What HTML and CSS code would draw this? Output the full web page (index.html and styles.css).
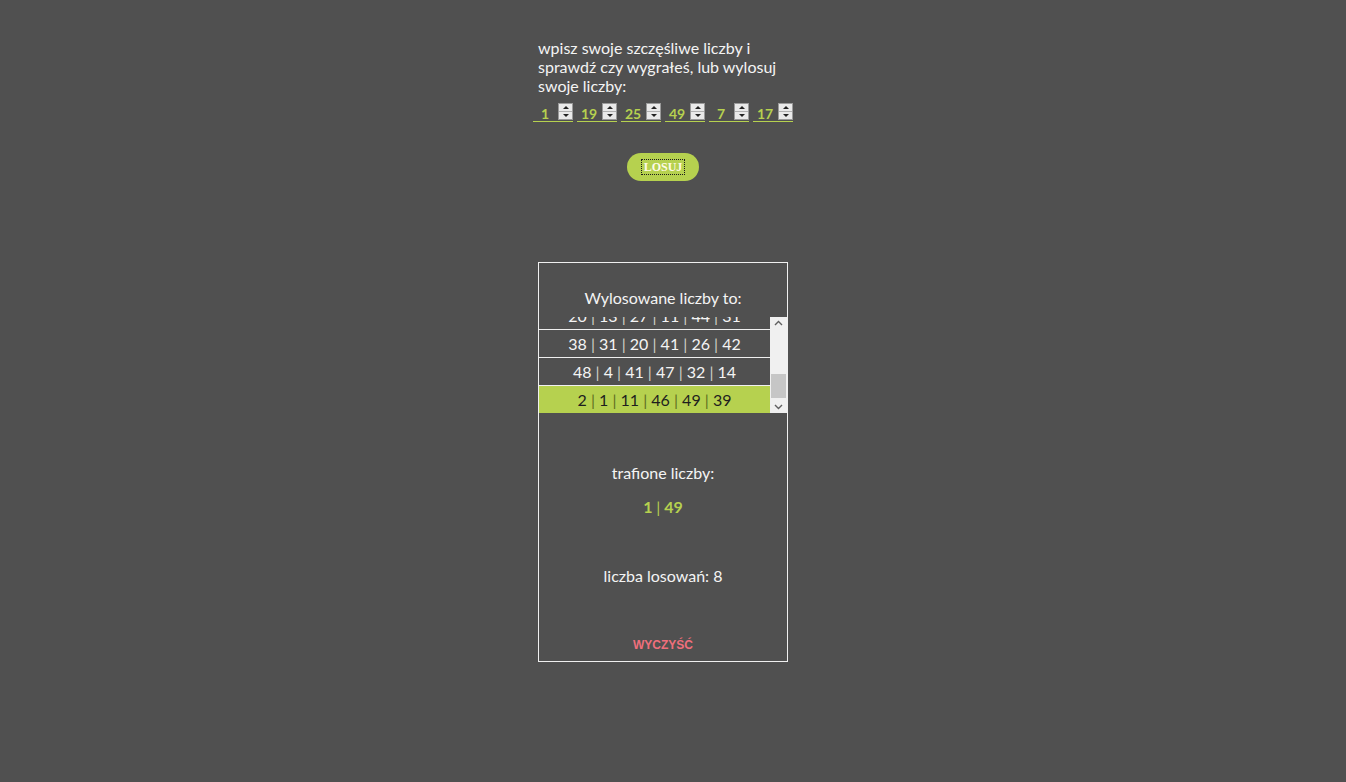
FILE: index.html
```html
<!DOCTYPE html>
<html lang="pl">
<head>
<meta charset="utf-8">
<title>Lotto</title>
<link rel="stylesheet" href="styles.css">
</head>
<body>
<div class="wrap">
  <div class="col">
    <p class="intro">wpisz swoje szczęśliwe liczby i sprawdź czy wygrałeś, lub wylosuj swoje liczby:</p>
    <div class="inputs">
      <span class="num"><input class="num-field" type="text" value="1"><span class="spin"><span class="up"></span><span class="down"></span></span></span>
      <span class="num"><input class="num-field" type="text" value="19"><span class="spin"><span class="up"></span><span class="down"></span></span></span>
      <span class="num"><input class="num-field" type="text" value="25"><span class="spin"><span class="up"></span><span class="down"></span></span></span>
      <span class="num"><input class="num-field" type="text" value="49"><span class="spin"><span class="up"></span><span class="down"></span></span></span>
      <span class="num"><input class="num-field" type="text" value="7"><span class="spin"><span class="up"></span><span class="down"></span></span></span>
      <span class="num"><input class="num-field" type="text" value="17"><span class="spin"><span class="up"></span><span class="down"></span></span></span>
    </div>
    <div class="btn-row">
      <button class="losuj"><span class="focus">LOSUJ</span></button>
    </div>

    <div class="box">
      <h2 class="box-title">Wylosowane liczby to:</h2>
      <div class="list-wrap">
        <div class="list">
          <div class="row">5 <span class="p">|</span> 12 <span class="p">|</span> 33 <span class="p">|</span> 8 <span class="p">|</span> 21 <span class="p">|</span> 40</div>
          <div class="row">17 <span class="p">|</span> 3 <span class="p">|</span> 29 <span class="p">|</span> 45 <span class="p">|</span> 10 <span class="p">|</span> 36</div>
          <div class="row">9 <span class="p">|</span> 22 <span class="p">|</span> 14 <span class="p">|</span> 30 <span class="p">|</span> 6 <span class="p">|</span> 43</div>
          <div class="row">34 <span class="p">|</span> 18 <span class="p">|</span> 2 <span class="p">|</span> 25 <span class="p">|</span> 39 <span class="p">|</span> 47</div>
          <div class="row">20 <span class="p">|</span> 13 <span class="p">|</span> 27 <span class="p">|</span> 11 <span class="p">|</span> 44 <span class="p">|</span> 31</div>
          <div class="row">38 <span class="p">|</span> 31 <span class="p">|</span> 20 <span class="p">|</span> 41 <span class="p">|</span> 26 <span class="p">|</span> 42</div>
          <div class="row">48 <span class="p">|</span> 4 <span class="p">|</span> 41 <span class="p">|</span> 47 <span class="p">|</span> 32 <span class="p">|</span> 14</div>
          <div class="row row-active">2 <span class="p">|</span> 1 <span class="p">|</span> 11 <span class="p">|</span> 46 <span class="p">|</span> 49 <span class="p">|</span> 39</div>
        </div>
        <div class="scrollbar">
          <svg class="arrow" width="17" height="13" viewBox="0 0 17 13"><path d="M5 8 L8.5 4.5 L12 8" fill="none" stroke="#606060" stroke-width="1.4"/></svg>
          <div class="track"><div class="thumb"></div></div>
          <svg class="arrow" width="17" height="13" viewBox="0 0 17 13"><path d="M5 5 L8.5 8.5 L12 5" fill="none" stroke="#606060" stroke-width="1.4"/></svg>
        </div>
      </div>
      <p class="hits-label">trafione liczby:</p>
      <p class="hits">1 <span class="hp">|</span> 49</p>
      <p class="count">liczba losowań: 8</p>
      <button class="clear">WYCZYŚĆ</button>
    </div>
  </div>
</div>
</body>
</html>
```

FILE: styles.css
```css
html, body {
  margin: 0;
  padding: 0;
  background: #505050;
}

body {
  font-family: Lato, "Open Sans", sans-serif;
  color: #f4f4f4;
  font-size: 16px;
}

.wrap {
  width: 270px;
  margin: 0 auto;
  padding-top: 38px;
}

.col {
  width: 250px;
}

.intro {
  margin: 0;
  line-height: 19px;
}

.inputs {
  margin-top: 8px;
  display: flex;
  justify-content: center;
  gap: 4px;
  margin-left: -10px;
  margin-right: -10px;
}

.num {
  display: inline-flex;
  width: 40px;
  height: 18px;
  border-bottom: 1px solid #b6d14f;
  box-sizing: content-box;
}

.num-field {
  width: 24px;
  height: 18px;
  padding: 2px 0 0;
  margin: 0;
  border: 0;
  box-sizing: border-box;
  background: transparent;
  color: #b6d14f;
  font-family: Lato, sans-serif;
  font-weight: bold;
  font-size: 14px;
  text-align: center;
  line-height: 16px;
  outline: none;
}

.spin {
  width: 15px;
  height: 17px;
  margin-left: 1px;
  display: flex;
  flex-direction: column;
  border: 1px solid #9a9a9a;
  background: #e9e9e9;
  box-sizing: border-box;
}

.up, .down {
  flex: 1;
  position: relative;
}

.up {
  border-bottom: 1px solid #b0b0b0;
}

.up::after, .down::after {
  content: "";
  position: absolute;
  left: 4px;
  width: 0;
  height: 0;
  border-left: 3px solid transparent;
  border-right: 3px solid transparent;
}

.up::after {
  top: 2px;
  border-bottom: 3px solid #222;
}

.down::after {
  top: 2px;
  border-top: 3px solid #222;
}

.btn-row {
  margin-top: 31px;
  display: flex;
  justify-content: center;
}

.losuj {
  width: 72px;
  height: 28px;
  border: 0;
  border-radius: 14px;
  background: #b6d14f;
  color: #fffbe6;
  font-family: "Liberation Serif", serif;
  font-weight: bold;
  font-size: 12px;
  padding: 0;
  display: flex;
  align-items: center;
  justify-content: center;
}

.focus {
  border: 1px dotted #1c1c1c;
  padding: 1px 2px;
  line-height: 12px;
}

.box {
  margin-top: 81px;
  border: 1px solid #f0f0f0;
  height: 373px;
  padding-top: 25px;
  box-sizing: content-box;
  display: flex;
  flex-direction: column;
  align-items: center;
  text-align: center;
}

.box-title {
  margin: 0;
  font-size: 16px;
  font-weight: normal;
  line-height: 19px;
}

.list-wrap {
  margin-top: 10px;
  width: 100%;
  display: flex;
  height: 96px;
}

.list {
  flex: 1;
  height: 96px;
  overflow: hidden;
  display: flex;
  flex-direction: column;
  justify-content: flex-end;
}

.row {
  flex-shrink: 0;
  height: 27px;
  line-height: 27px;
  border-bottom: 1px solid #f0f0f0;
  font-size: 16px;
}

.row:last-child {
  border-bottom: 0;
}

.p {
  color: #d2d2c8;
}

.row-active {
  background: #b6d14f;
  color: #1e1e1e;
}

.row-active .p {
  color: #5f6e22;
}

.scrollbar {
  width: 17px;
  background: #f0f0f0;
  display: flex;
  flex-direction: column;
}

.arrow {
  display: block;
  flex-shrink: 0;
}

.track {
  flex: 1;
  position: relative;
}

.thumb {
  position: absolute;
  left: 1px;
  right: 1px;
  bottom: 2px;
  height: 24px;
  background: #c6c6c6;
}

.hits-label {
  margin: 50px 0 0;
  line-height: 19px;
}

.hits {
  margin: 15px 0 0;
  line-height: 19px;
  color: #b6d14f;
  font-weight: bold;
}

.hp {
  font-weight: normal;
}

.count {
  margin: 50px 0 0;
  line-height: 19px;
}

.clear {
  margin-top: 53px;
  border: 0;
  background: transparent;
  padding: 0;
  color: #ef6f7c;
  font-family: "Liberation Sans", Arial, sans-serif;
  font-weight: bold;
  font-size: 12px;
  line-height: 14px;
}
```
